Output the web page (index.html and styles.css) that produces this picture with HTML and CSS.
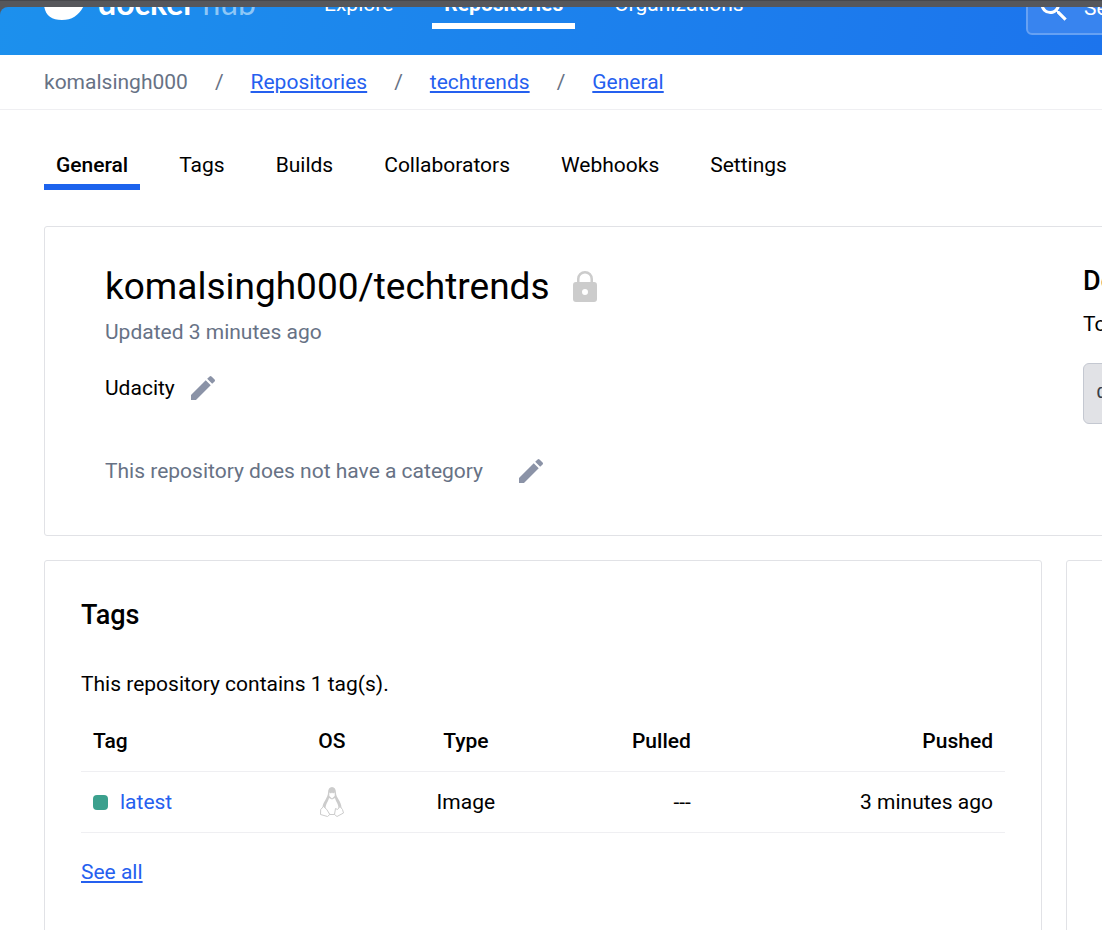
FILE: index.html
```html
<!DOCTYPE html>
<html lang="en">
<head>
<meta charset="utf-8">
<meta name="viewport" content="width=device-width, initial-scale=1">
<title>komalsingh000/techtrends - Docker Hub</title>
<link rel="stylesheet" href="styles.css">
</head>
<body>
<svg hidden>
  <symbol id="pencil" viewBox="0 0 24 24"><path d="M3 17.25V21h3.75L17.81 9.94l-3.75-3.75L3 17.25zM20.71 7.04a1 1 0 0 0 0-1.41l-2.34-2.34a1 1 0 0 0-1.41 0l-1.83 1.83 3.75 3.75 1.83-1.83z"/></symbol>
</svg>
<div class="strip"></div>
<div class="header-wrap">
<header class="header">
  <a class="brand" href="#">
    <svg class="whale" viewBox="0 0 42 30" aria-hidden="true"><path d="M0 10H42C38 23 30 30 18 30C7 30 1 25 0 15Z"/></svg>
    <span class="brand-name">docker <span class="brand-hub">hub</span></span>
  </a>
  <nav class="nav">
    <a href="#">Explore</a>
    <a class="active" href="#">Repositories</a>
    <a href="#">Organizations</a>
  </nav>
  <label class="search">
    <svg viewBox="0 0 24 24" aria-hidden="true"><path d="M15.5 14h-.79l-.28-.27A6.47 6.47 0 0 0 16 9.5 6.5 6.5 0 1 0 9.5 16c1.61 0 3.09-.59 4.23-1.57l.27.28v.79l5 4.99L20.49 19l-4.99-5zm-6 0C7.01 14 5 11.99 5 9.5S7.01 5 9.5 5 14 7.01 14 9.5 11.99 14 9.5 14z"/></svg>
    <input type="text" placeholder="Search" aria-label="Search">
  </label>
</header>
</div>
<nav class="crumbs" aria-label="Breadcrumb">
  <span>komalsingh000</span><span>/</span>
  <a href="#">Repositories</a><span>/</span>
  <a href="#">techtrends</a><span>/</span>
  <a href="#">General</a>
</nav>
<nav class="tabs" aria-label="Repository">
  <a class="current" href="#">General</a>
  <a href="#">Tags</a>
  <a href="#">Builds</a>
  <a href="#">Collaborators</a>
  <a href="#">Webhooks</a>
  <a href="#">Settings</a>
</nav>
<main class="cards">
  <section class="card summary">
    <div class="details">
      <div class="title-row">
        <h1>komalsingh000/techtrends</h1>
        <svg class="lock" viewBox="0 0 24 32" role="img" aria-label="Private"><path fill-rule="evenodd" d="M4 11V8a8 8 0 0 1 16 0v3h1a3 3 0 0 1 3 3v14a3 3 0 0 1-3 3H3a3 3 0 0 1-3-3V14a3 3 0 0 1 3-3zM6.5 11h11V8a5.500 5.500 0 0 0-11 0zM12 18a3 3 0 1 0 0 6 3 3 0 0 0 0-6z"/></svg>
      </div>
      <p class="updated">Updated 3 minutes ago</p>
      <div class="field"><span>Udacity</span><button type="button" aria-label="Edit description"><svg><use href="#pencil"/></svg></button></div>
      <div class="field category"><span>This repository does not have a category</span><button type="button" aria-label="Edit category"><svg><use href="#pencil"/></svg></button></div>
    </div>
    <aside class="commands">
      <h2>Docker commands</h2>
      <p>To push a new tag to this repository,</p>
      <code>docker push</code>
    </aside>
  </section>
  <section class="card tags">
    <h2>Tags</h2>
    <p>This repository contains 1 tag(s).</p>
    <table>
      <colgroup><col class="c-tag"><col class="c-os"><col class="c-type"><col class="c-pulled"><col class="c-pushed"></colgroup>
      <thead><tr><th>Tag</th><th class="center">OS</th><th class="center">Type</th><th class="right">Pulled</th><th class="right">Pushed</th></tr></thead>
      <tbody><tr>
        <td><div class="tag"><span class="dot"></span><a href="#">latest</a></div></td>
        <td class="center"><svg class="tux" viewBox="0 0 24 30" role="img" aria-label="Linux">
          <path class="fill" d="M8 6C8 2 9.500 0 12 0s4 2 4 6c0 5 5.500 8 5.500 15l-2 2.500L16 28H8l-3.500-5-2-2C2.500 15 8 11 8 6z"/>
          <path class="face" d="M9.300 5.500l1.700 1 1-1 1 1 1.700-1v3.500L12 11.500 9.300 9z"/>
          <path class="face" d="M9 11l3 1.500 3-1.500c1 4 3.500 6 3.500 10.500 0 3-2 5.500-6.500 5.500s-6.500-2.500-6.500-5.500C5.500 17 8 15 9 11z"/>
          <path class="foot" d="M3.500 19.500L.7 22.500.5 27.500l7 2 2.300-2-3-5z"/>
          <path class="foot" d="M20 19.500l2.500 3 1 3.500-6.500 3.500-2.500-2 1-6 2 1z"/>
        </svg></td>
        <td class="center">Image</td>
        <td class="right">---</td>
        <td class="right">3 minutes ago</td>
      </tr></tbody>
    </table>
    <a class="see-all" href="#">See all</a>
  </section>
  <section class="card builds"></section>
</main>
</body>
</html>
```
FILE: styles.css
```css
* { box-sizing: border-box; }
body {
  margin: 0;
  min-height: 100vh;
  display: flex;
  flex-direction: column;
  overflow: hidden;
  background: #fff;
  color: #000;
  font: 21px/24px Roboto, sans-serif;
}
h1, h2, p { margin: 0; }
a { color: #2560ef; }
svg { display: block; }
svg[hidden] { display: none; }

.strip { height: 7px; background: #56575b; border-top: 1px solid #47484c; }
.header-wrap { background: #56575b; }
.header {
  height: 48px;
  padding-left: 44px;
  display: flex;
  align-items: flex-end;
  overflow: hidden;
  border-top-left-radius: 8px;
  background: linear-gradient(100deg, #1c90ed, #1c74ed);
}
.brand { display: flex; align-items: flex-end; gap: 12px; padding-bottom: 32px; color: #fff; text-decoration: none; }
.whale { width: 42px; height: 30px; margin-bottom: 3px; fill: #fff; }
.brand-name { font: 700 32px/40px Lato, sans-serif; white-space: pre; }
.brand-hub { color: #8ec7f6; font-weight: 400; }
.nav { display: flex; gap: 27px; padding-bottom: 26px; margin-left: 56px; }
.nav a { padding: 0 12px 7px; border-bottom: 6px solid transparent; color: #fff; text-decoration: none; }
.nav .active { border-color: #fff; font-weight: 700; }
.search {
  flex: none;
  display: flex;
  align-items: center;
  gap: 12px;
  width: 450px;
  height: 54px;
  margin: 0 -374px 20px auto;
  padding-left: 8px;
  border: 2px solid #66a1f3;
  border-radius: 6px;
  background: #3884ef;
}
.search svg { width: 36px; height: 36px; fill: #fff; }
.search input { border: 0; padding: 0; background: none; color: #fff; font: inherit; }
.search input::placeholder { color: #fff; opacity: 1; }

.crumbs {
  display: flex;
  gap: 27px;
  padding: 15px 44px;
  border-bottom: 1px solid #efeff2;
  color: #677285;
}
.tabs { display: flex; gap: 27px; padding: 43px 44px 36px; }
.tabs a { padding: 0 12px 7px; border-bottom: 6px solid transparent; color: #000; text-decoration: none; }
.tabs .current { border-color: #1d63ed; font-weight: 500; }

.cards {
  flex: 1;
  display: grid;
  grid-template-columns: minmax(0, 1fr) 436px;
  grid-template-rows: auto 1fr;
  gap: 24px;
  margin: 0 -400px -4px 44px;
}
.card { border: 1px solid #e1e2e6; border-radius: 3px; }
.summary { grid-column: 1 / -1; display: flex; justify-content: space-between; padding: 36px 60px 52px; }
.title-row { display: flex; gap: 23px; align-items: center; }
h1 { font-size: 37px; line-height: 48px; font-weight: 400; }
.lock { width: 24px; height: 32px; fill: #ccc; }
.updated { margin-top: 9px; color: #677285; }
.field { display: flex; gap: 12px; margin-top: 32px; align-items: center; height: 24px; }
.field button { flex: none; padding: 0; border: 0; background: none; }
.field svg { width: 32px; height: 32px; fill: #8b93a7; }
.category { margin-top: 59px; gap: 32px; color: #677285; }
.commands { width: 358px; white-space: nowrap; }
h2 { font-size: 27px; line-height: 36px; font-weight: 500; }
.commands p { margin: 13px 0 27px; }
.commands code {
  display: block;
  padding: 17px 12px 18px;
  border: 1px solid #c4c8d1;
  border-radius: 6px;
  background: #e1e2e6;
  color: #393f49;
  font: 20px/24px "Liberation Mono", monospace;
}
.tags { padding: 36px; }
.tags p { margin: 39px 0 15px; }
table { width: 100%; table-layout: fixed; border-spacing: 0; }
th, td { height: 61px; padding: 0 12px; border-bottom: 1px solid #efeff2; text-align: left; }
th { height: 61px; font-weight: 500; }
.c-tag { width: 21.5%; }
.c-os { width: 11.3%; }
.c-type { width: 17.7%; }
.c-pulled { width: 16.8%; }
.c-pushed { width: 32.7%; }
.center { text-align: center; }
.right { text-align: right; }
.tag { display: flex; align-items: center; gap: 12px; }
.tag a { text-decoration: none; }
.dot { width: 15px; height: 15px; border-radius: 4px; background: #3ba08d; }
.tux { width: 24px; height: 30px; margin: 0 auto; }
.tux .fill { fill: #ccc; }
.tux .face { fill: #fff; }
.tux .foot { fill: #fff; stroke: #ccc; stroke-width: 1; }
.see-all { display: inline-block; margin-top: 27px; }
```
